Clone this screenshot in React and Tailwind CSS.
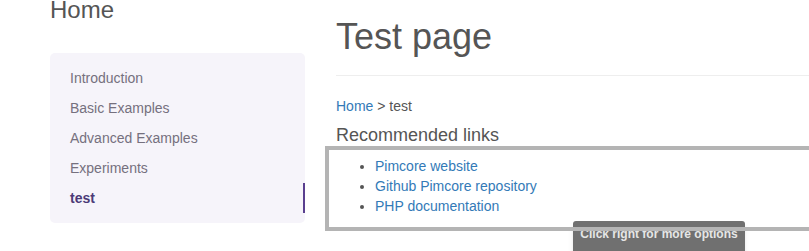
const navItems = [
  { label: "Introduction" },
  { label: "Basic Examples" },
  { label: "Advanced Examples" },
  { label: "Experiments" },
  { label: "test", active: true },
];

const links = ["Pimcore website", "Github Pimcore repository", "PHP documentation"];

const App = () => {
  return (
    <div
      className="relative w-[809px] h-[251px] overflow-hidden bg-white flex"
      style={{ fontFamily: '"Liberation Sans", Arial, sans-serif' }}
    >
      <aside className="ml-[50px] w-[255px] shrink-0">
        <h2 className="mt-[-2px] text-[24px] leading-[24px] text-[#555]">Home</h2>
        <nav className="mt-[31px] rounded-[5px] bg-[#f6f4fa] py-[10px]">
          {navItems.map((item) => (
            <div
              key={item.label}
              className={
                item.active
                  ? "h-[30px] pl-[20px] text-[14px] leading-[30px] font-bold text-[#4c3a78] border-r-2 border-[#5a3f8f]"
                  : "h-[30px] pl-[20px] text-[14px] leading-[30px] text-[#75707e]"
              }
            >
              {item.label}
            </div>
          ))}
        </nav>
      </aside>

      <main className="ml-[31px] flex-1 min-w-0">
        <h1 className="mt-[17px] text-[36px] leading-[40px] text-[#555]">Test page</h1>
        <hr className="mt-[18px] border-0 border-t border-[#eee]" />
        <div className="mt-[20px] text-[14px] leading-[20px] text-[#555]">
          <a className="text-[#337ab7]">Home</a> &gt; test
        </div>
        <h3 className="mt-[9px] text-[18px] leading-[20px] text-[#555]">Recommended links</h3>
        <div className="relative z-10 mt-[1px] ml-[-11px] mr-[-40px] border-4 border-[#b4b4b4] pt-[6px] pb-[11px]">
          <ul className="list-disc pl-[46px] text-[14px] leading-[20px] text-[#555]">
            {links.map((l) => (
              <li key={l}>
                <a className="text-[#337ab7]">{l}</a>
              </li>
            ))}
          </ul>
        </div>
      </main>

      <div className="absolute z-0 left-[573px] top-[221px] w-[172px] h-[40px] rounded-[3px] bg-[#707070] shadow-md pt-[5px] text-center text-[12px] leading-[16px] font-bold text-[#e6e6e6]">
        Click right for more options
      </div>
    </div>
  );
};

export default App;
